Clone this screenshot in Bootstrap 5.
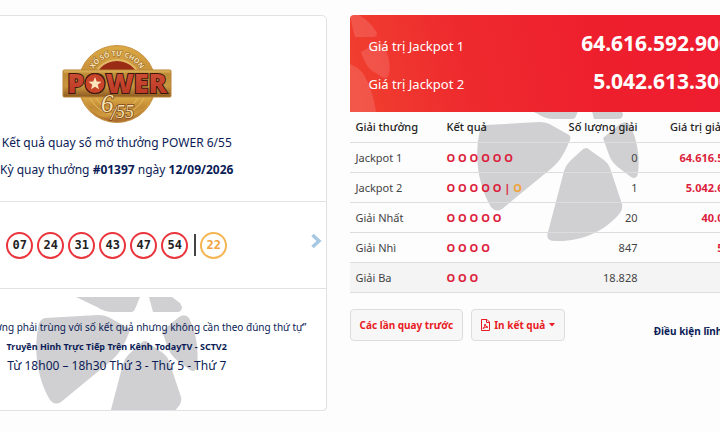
<!DOCTYPE html>
<html lang="vi">
<head>
<meta charset="utf-8">
<meta name="viewport" content="width=device-width, initial-scale=1">
<title>Power 6/55</title>
<link href="https://cdn.jsdelivr.net/npm/bootstrap@5.3.0/dist/css/bootstrap.min.css" rel="stylesheet">
<style>
:root{--petals:url("data:image/svg+xml,%3Csvg xmlns='http://www.w3.org/2000/svg' width='162' height='138' fill='%23d0d0d2'%3E%3Cpath d='M40 0L61 10Q68 15 77 15H95Q98 15 99 12L104 0zM113 0L117 15H141Q146 15 146 10L144 6L136 0zM9 21L62 18Q70 18 76 22L92 31Q95 33 92 38C87 51 81 60 70 68L25 105Q19 109 14 103C3 85-3 58 2 31Q3 22 9 21zM104 47Q109 41 114 47L127 56Q131 59 133 64L145 100Q146 105 143 109C128 127 105 138 78 137Q68 137 71 128L87 67Q89 61 93 57zM126 34L143 20Q149 16 153 21C160 35 163 52 161 69Q160 76 154 73L142 64Q135 59 132 51z'/%3E%3C/svg%3E")}
body{background:#fdfdfd;color:#333;font-family:"Noto Sans","Open Sans",sans-serif;font-size:12px;overflow:hidden}
.stage{margin:0 -47px 0 -93px;padding-top:15px;gap:23px}
.pane{flex:1 1 0;min-width:0}
.draw-card{border:1px solid #e2e2e4;border-radius:5px;box-shadow:0 1px 1px #eee;color:#0b1c56;background:#fff}
.draw-head{height:185px;padding-top:28px;font-size:12px;line-height:18px}
.draw-head p{margin:0 0 9px}
.draw-logo{display:block;margin:0 auto 10px}
.balls{height:88px;border:solid #e2e2e4;border-width:1px 0;gap:4px}
.ball{width:27px;height:27px;border:2px solid #ea353d;border-radius:50%;font:bold 12px "DejaVu Sans Mono",monospace;color:#222}
.ball-extra{color:#f2a23a;border-color:#f4b552}
.split{width:2px;height:22px;margin-left:2px;background:#444}
.arrow-btn{background:none;border:0;padding:0 0 8px;line-height:0}
.notes{height:121px;padding-top:28px;background:var(--petals) center 8px no-repeat}
.notes p{margin:0;white-space:nowrap}
.rule-note{font-size:10px;line-height:20px}
.tv-note{font-size:9px;font-weight:700;line-height:20px}
.time-note{font-size:12px;line-height:18px}
.jackpots{height:97px;padding:12px 36px 0 19px;border-radius:4px 4px 0 0;color:#fff;background:
url("data:image/svg+xml,%3Csvg xmlns='http://www.w3.org/2000/svg' width='40' height='97' fill='%23fff' fill-opacity='.13'%3E%3Cpath d='M0 0H9Q21 7 27 18Q27 22 23 22H5Q2 12 0 0zM11 37L27 28Q31 26 34 32C40 43 41 52 38 62Q35 64 32 62L21 55Q15 50 11 37zM0 49Q11 54 14 60C20 70 24 83 26 97H0z'/%3E%3C/svg%3E") 0 0 no-repeat,
linear-gradient(78deg,#f0402f 0,#ee2a2e 28%,#ee1f2d 60%,#ed1b30 100%)}
.jackpot-line{height:38px}
.jackpot-name{font-size:13px}
.jackpot-sum{font-size:21px;font-weight:700;line-height:32px}
.prize-wrap{background:var(--petals) center -8px no-repeat}
.prizes{--bs-table-bg:transparent;margin:0;color:#444;font-size:11px;line-height:17px;table-layout:fixed}
.prizes>:not(caption)>*>*{padding:6px;border-color:#ddd;white-space:nowrap}
.prizes th{font-weight:500;color:#222;line-height:18px}
.prizes .last-row{background:#f4f4f4}
.hit,.sum-cell{color:#dc1e3c!important;font-weight:700}
.prizes>tbody>tr>.sum-cell{padding-right:9px}
.hit i{font-style:normal;color:#f2a23a}
.name-col{width:91px}.hit-col{width:103px}.count-col{width:100px}
.act{font-size:10px;font-weight:700;color:#e81c24;background:#f7f7f7;border:1px solid #ddd;border-radius:4px;height:32px;padding:0 9px}
.terms{font-size:10px;font-weight:700;color:#0b1c56;white-space:nowrap;margin:15px 4px 0 0}
</style>
<script src="https://cdn.jsdelivr.net/npm/bootstrap@5.3.0/dist/js/bootstrap.bundle.min.js"></script>
</head>
<body>
<main class="stage d-flex align-items-start">
<section class="pane draw-card">
<div class="draw-head text-center">
<svg class="draw-logo" width="110" height="80" viewBox="0 0 110 80" role="img" aria-label="Power 6/55">
<defs>
<linearGradient id="gold" x2="0" y2="1"><stop stop-color="#dba945"/><stop offset=".45" stop-color="#c18a35"/><stop offset=".8" stop-color="#cf9a3e"/><stop offset="1" stop-color="#a9692c"/></linearGradient>
<linearGradient id="bar" x2="0" y2="1"><stop stop-color="#e5bd62"/><stop offset=".15" stop-color="#bd8a35"/><stop offset=".6" stop-color="#c99640"/><stop offset="1" stop-color="#8d5a22"/></linearGradient>
<linearGradient id="rust" x2="0" y2="1"><stop stop-color="#d4553a"/><stop offset="1" stop-color="#b53320"/></linearGradient>
<path id="arc" d="M27 40A28 28 0 0 1 83 40"/>
</defs>
<circle cx="55" cy="40" r="38.500" fill="url(#gold)" stroke="#c89140"/>
<circle cx="55" cy="40" r="24" fill="#9a2c16" stroke="#e2b965" stroke-width="2"/>
<path d="M20 53A38 38 0 0 0 90 53z" fill="url(#gold)"/>
<path d="M28 54A30 30 0 0 0 82 54M34 54A24 24 0 0 0 76 54" fill="none" stroke="#e2b965"/>
<text font-family="Noto Sans,sans-serif" font-size="7" font-weight="700" fill="#f7e6b8" stroke="#8d5620" stroke-width=".8" paint-order="stroke"><textPath href="#arc" startOffset="50%" text-anchor="middle">XỔ SỐ TỰ CHỌN</textPath></text>
<rect x="1" y="26" width="108" height="27" rx="1" fill="url(#bar)" stroke="#b88536"/>
<text x="55" y="49" text-anchor="middle" font-family="Open Sans,sans-serif" font-size="27" font-weight="800" fill="url(#rust)" stroke="#3b1710" stroke-width="2" paint-order="stroke">POWER</text>
<circle cx="33" cy="39.500" r="10" fill="#c8452a" stroke="#3b1710"/>
<path d="M33 33l1.700 4.500 4.800.200-3.800 3 1.300 4.600-4-2.600-4 2.600 1.300-4.600-3.800-3 4.800-.200z" fill="#fbe7bd"/>
<g fill="#f6e2b0" stroke="#7d4519" stroke-width="1.500" paint-order="stroke" font-family="Liberation Serif,serif" font-style="italic"><text x="39" y="68" font-size="25">6</text><text x="49" y="76" font-size="20">/</text><text x="54" y="74" font-size="18">55</text></g>
</svg>
<p>Kết quả quay số mở thưởng POWER 6/55</p>
<p>Kỳ quay thưởng <b>#01397</b> ngày <b>12/09/2026</b></p>
</div>
<div class="balls d-flex align-items-center justify-content-center position-relative">
<span class="ball d-flex align-items-center justify-content-center">07</span>
<span class="ball d-flex align-items-center justify-content-center">24</span>
<span class="ball d-flex align-items-center justify-content-center">31</span>
<span class="ball d-flex align-items-center justify-content-center">43</span>
<span class="ball d-flex align-items-center justify-content-center">47</span>
<span class="ball d-flex align-items-center justify-content-center">54</span>
<span class="split"></span>
<span class="ball ball-extra d-flex align-items-center justify-content-center">22</span>
<button class="arrow-btn position-absolute end-0 me-1" type="button" aria-label="Kỳ sau"><svg width="11" height="16" viewBox="0 0 11 16" fill="none" stroke="#a6c8e2" stroke-width="3.500"><path d="M1.500 2L8 8l-6.500 6"/></svg></button>
</div>
<div class="notes d-flex flex-column align-items-center">
<p class="rule-note">“Các số dự thưởng phải trùng với số kết quả nhưng không cần theo đúng thứ tự”</p>
<p class="tv-note">Truyền Hình Trực Tiếp Trên Kênh TodayTV - SCTV2</p>
<p class="time-note">Từ 18h00 – 18h30 Thứ 3 - Thứ 5 - Thứ 7</p>
</div>
</section>
<section class="pane">
<div class="jackpots">
<div class="jackpot-line d-flex align-items-baseline justify-content-between"><span class="jackpot-name">Giá trị Jackpot 1</span><span class="jackpot-sum">64.616.592.900</span></div>
<div class="jackpot-line d-flex align-items-baseline justify-content-between"><span class="jackpot-name">Giá trị Jackpot 2</span><span class="jackpot-sum">5.042.613.300</span></div>
</div>
<div class="prize-wrap">
<table class="table prizes">
<thead><tr><th class="name-col">Giải thưởng</th><th class="hit-col">Kết quả</th><th class="count-col text-end">Số lượng giải</th><th class="text-end">Giá trị giải (đồng)</th></tr></thead>
<tbody>
<tr><td>Jackpot 1</td><td class="hit">O O O O O O</td><td class="text-end">0</td><td class="sum-cell text-end">64.616.592.900</td></tr>
<tr><td>Jackpot 2</td><td class="hit">O O O O O | <i>O</i></td><td class="text-end">1</td><td class="sum-cell text-end">5.042.613.300</td></tr>
<tr><td>Giải Nhất</td><td class="hit">O O O O O</td><td class="text-end">20</td><td class="sum-cell text-end">40.000.000</td></tr>
<tr><td>Giải Nhì</td><td class="hit">O O O O</td><td class="text-end">847</td><td class="sum-cell text-end">500.000</td></tr>
<tr class="last-row"><td>Giải Ba</td><td class="hit">O O O</td><td class="text-end">18.828</td><td class="sum-cell text-end">50.000</td></tr>
</tbody>
</table>
</div>
<div class="d-flex align-items-start gap-2 pt-3">
<button class="act" type="button">Các lần quay trước</button>
<button class="act d-flex align-items-center" type="button"><svg class="me-1" width="9" height="12" viewBox="0 0 9 12" fill="none" stroke="#e81c24"><path d="M.5.500H6L8.500 3V11.500H.5zM5.500.500V3.500H8.500M2 9.500Q4 8 4 5Q4.500 8 7 8.200Q4.500 7.800 2 9.500"/></svg>In kết quả<svg class="ms-1" width="6" height="4" viewBox="0 0 6 4"><path d="M0 0h6L3 3.500z" fill="#e81c24"/></svg></button>
<a class="terms ms-auto text-decoration-none" href="#">Điều kiện lĩnh thưởng</a>
</div>
</section>
</main>
</body>
</html>
